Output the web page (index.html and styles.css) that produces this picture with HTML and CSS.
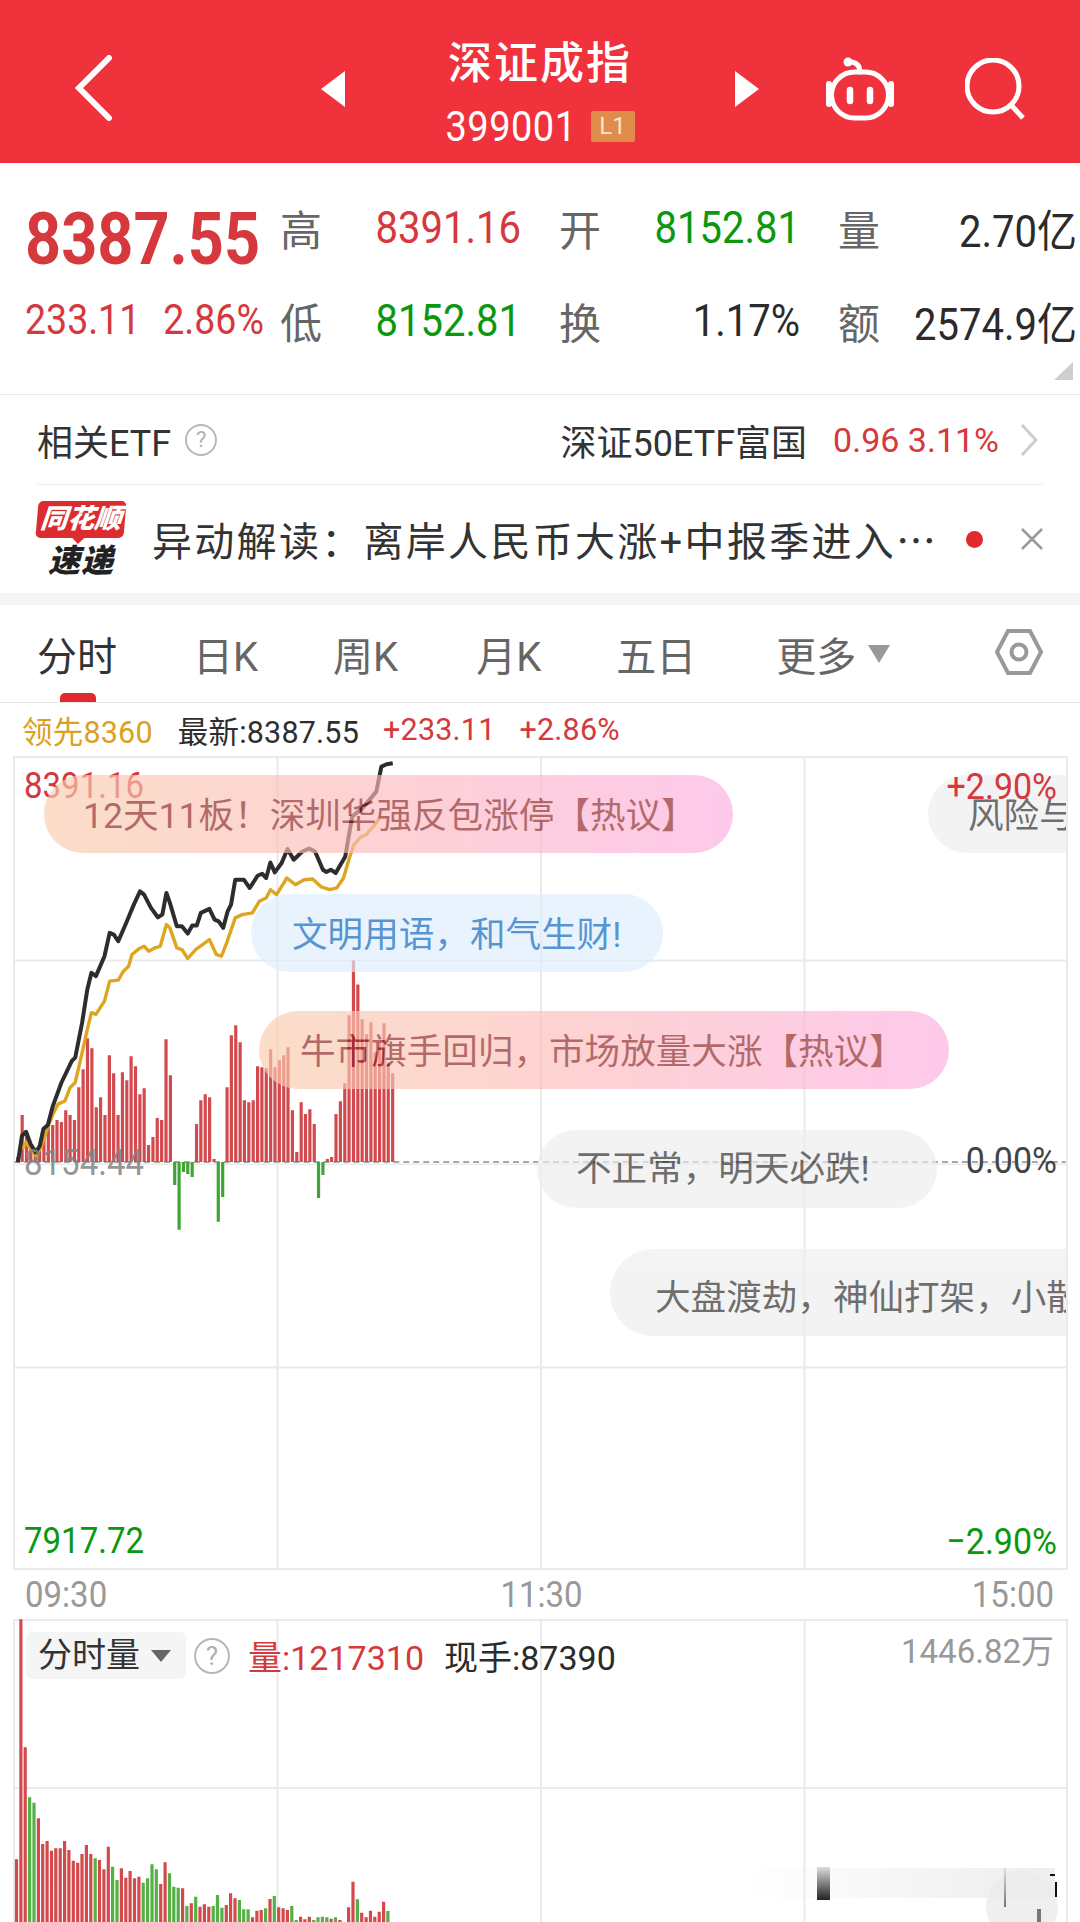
FILE: index.html
```html
<!DOCTYPE html>
<html lang="zh">
  <head>
    <meta charset="utf-8" />
    <title>深证成指</title>
    <link rel="stylesheet" href="styles.css">
  </head>
  <body>
    <header class="topbar">
      <svg class="back" viewBox="0 0 48 68"><path d="M39 3 L9 33 L39 63" /></svg>
      <svg class="tri tri-left" viewBox="0 0 25 36"><path d="M0 18 L24 0 V36 Z" /></svg>
      <div class="title">
        <div class="title-name">深证成指</div>
        <div class="title-code"><span class="tall">399001</span><span class="badge">L1</span></div>
      </div>
      <svg class="tri" viewBox="0 0 25 36"><path d="M25 18 L1 0 V36 Z" /></svg>
      <svg class="robot" viewBox="0 0 70 64">
        <rect x="6.5" y="15" width="57" height="46" rx="23" />
        <path class="ear" d="M4 27 V47 M66 27 V47" />
        <path d="M35 15 C35 9 32 6 27 5" />
        <circle class="dot" cx="23" cy="5" r="4.5" />
        <path class="eye" d="M25 33 V44 M45 33 V44" />
      </svg>
      <svg class="search" viewBox="0 0 62 62"><circle cx="28" cy="28" r="26" /><path d="M47 48 L58 60" /></svg>
    </header>

    <section class="quote">
      <div class="price">8387.55</div>
      <div class="stat"><span class="lbl">高</span><span class="val red">8391.16</span></div>
      <div class="stat"><span class="lbl">开</span><span class="val green">8152.81</span></div>
      <div class="stat"><span class="lbl">量</span><span class="val dark">2.70亿</span></div>
      <div class="change"><span class="tall">233.11</span><span class="tall">2.86%</span></div>
      <div class="stat"><span class="lbl">低</span><span class="val green">8152.81</span></div>
      <div class="stat"><span class="lbl">换</span><span class="val dark">1.17%</span></div>
      <div class="stat"><span class="lbl">额</span><span class="val dark">2574.9亿</span></div>
      <svg class="corner" viewBox="0 0 19 18"><path d="M19 0 V18 H0 Z" /></svg>
    </section>

    <section class="etf">
      <span class="etf-name">相关ETF</span>
      <span class="help">?</span>
      <span class="etf-fund">深证50ETF富国</span>
      <span class="etf-val">0.96 3.11%</span>
      <svg class="chev" viewBox="0 0 18 32"><path d="M2 1 L16 16 L2 31" /></svg>
    </section>

    <section class="ticker">
      <div class="logo">
        <div class="logo-top">同花顺</div>
        <div class="logo-sub">速递</div>
      </div>
      <div class="ticker-text">异动解读：离岸人民币大涨+中报季进入⋯</div>
      <span class="red-dot"></span>
      <svg class="close" viewBox="0 0 24 24"><path d="M2 2 L22 22 M22 2 L2 22" /></svg>
    </section>

    <div class="band"></div>

    <nav class="tabs">
      <span class="tab active">分时</span>
      <span class="tab t2">日K</span>
      <span class="tab t3">周K</span>
      <span class="tab t4">月K</span>
      <span class="tab t5">五日</span>
      <span class="tab t6">更多</span>
      <span class="caret"></span>
      <svg class="hex" viewBox="0 0 50 48">
        <path d="M14 3 H36 L47 24 L36 45 H14 L3 24 Z" />
        <circle cx="25" cy="24" r="7.5" />
      </svg>
    </nav>

    <div class="legend">
      <span class="lead">领先8360</span>
      <span class="last">最新:8387.55</span>
      <span class="up up1">+233.11</span>
      <span class="up up2">+2.86%</span>
    </div>

    <section class="chart">
      <svg id="priceChart" class="plot" viewBox="13 756 1054 814"></svg>
      <span class="ax ax-tl red">8391.16</span>
      <span class="ax ax-ml">8154.44</span>
      <span class="ax ax-mr">0.00%</span>
      <span class="ax ax-bl green">7917.72</span>
      <span class="ax ax-br green">−2.90%</span>
      <div class="barrage">
        <div class="bub hot b1">12天11板！深圳华强反包涨停【热议】</div>
        <div class="bub cool b2">文明用语，和气生财!</div>
        <div class="bub hot b3">牛市旗手回归，市场放量大涨【热议】</div>
        <div class="bub plain b4">不正常，明天必跌!</div>
        <div class="bub plain b5">大盘渡劫，神仙打架，小散遭殃</div>
        <div class="bub plain b6">风险与机遇并存</div>
      </div>
      <span class="ax ax-tr red">+2.90%</span>
    </section>

    <div class="times"><span class="tall">09:30</span><span class="tall mid">11:30</span><span class="tall">15:00</span></div>

    <section class="vol">
      <svg id="volChart" class="plot" viewBox="13 1619 1054 303"></svg>
      <div class="vol-head">
        <div class="chip">分时量<span class="chip-caret"></span></div>
        <span class="help help-vol">?</span>
        <span class="red vol-num">量:1217310</span>
        <span class="dark vol-hand">现手:87390</span>
        <span class="vol-max">1446.82万</span>
      </div>
      <div class="wm wm-band"></div>
      <div class="wm wm-block"></div>
      <div class="wm wm-circle"></div>
      <div class="wm wm-tick"></div>
      <div class="wm wm-bar"></div>
      <div class="wm wm-dash"></div>
      <div class="wm wm-bracket"></div>
    </section>

    <script src="chart.js"></script>
  </body>
</html>
```

FILE: styles.css
```css
html,
body {
  margin: 0;
  padding: 0;
}
body {
  width: 1080px;
  height: 1922px;
  overflow: hidden;
  background: #fff;
  color: #333;
  font-family: Roboto, "Noto Sans CJK SC", sans-serif;
}
.red {
  color: #d5383d;
}
.green {
  color: #0b980f;
}
.dark {
  color: #2b2b2b;
}
/* the app's digits are narrower and taller than Roboto */
.tall,
.val {
  display: inline-block;
  transform: scaleY(1.12);
}

/* top bar */
.topbar {
  height: 163px;
  background: #f0323c;
  display: flex;
  align-items: center;
  padding-top: 14px;
  box-sizing: border-box;
  color: #fff;
}
.back {
  width: 48px;
  height: 68px;
  margin-left: 70px;
  fill: none;
  stroke: #fff;
  stroke-width: 6;
  stroke-linecap: round;
}
.tri {
  width: 25px;
  height: 36px;
  fill: #fff;
}
.tri-left {
  margin-left: 203px;
}
.title {
  width: 388px;
  align-self: flex-start;
  text-align: center;
  margin-top: 20px;
}
.title-name {
  font-size: 44px;
  line-height: 60px;
  letter-spacing: 2px;
  font-weight: 500;
}
.title-code {
  font-size: 38px;
  line-height: 50px;
  margin-top: 7px;
  letter-spacing: 0.5px;
  display: flex;
  justify-content: center;
  align-items: center;
  gap: 14px;
}
.badge {
  width: 44px;
  height: 31px;
  line-height: 31px;
  background: #e08c4c;
  color: #fbe6c8;
  font-size: 24px;
  border-radius: 2px;
  letter-spacing: 0;
}
.robot {
  width: 70px;
  height: 64px;
  margin-left: 66px;
  fill: none;
  stroke: #fff;
  stroke-width: 5;
  stroke-linecap: round;
}
.robot .ear {
  stroke-width: 6;
}
.robot .eye {
  stroke-width: 6.5;
}
.robot .dot {
  fill: #fff;
  stroke: none;
}
.search {
  width: 62px;
  height: 62px;
  margin-left: 70px;
  fill: none;
  stroke: #fff;
  stroke-width: 5;
}

/* quote block */
.quote {
  height: 232px;
  box-sizing: border-box;
  border-bottom: 1px solid #e9e9e9;
  padding: 18px 4px 0 25px;
  display: grid;
  grid-template-columns: 217px 240px 240px 238px;
  grid-template-rows: 93px 93px;
  column-gap: 39px;
  position: relative;
}
.price {
  font-size: 63px;
  font-weight: 700;
  color: #d5383d;
  white-space: nowrap;
  line-height: 93px;
  margin-top: 11px;
  letter-spacing: 0;
  transform: scaleY(1.14);
}
.change {
  font-size: 37.5px;
  color: #d5383d;
  display: flex;
  gap: 23px;
  line-height: 93px;
  white-space: nowrap;
}
.stat {
  display: flex;
  justify-content: space-between;
  align-items: center;
  font-size: 40px;
  white-space: nowrap;
}
.lbl {
  color: #666;
  font-size: 42px;
  margin-left: -1px;
}
.corner {
  position: absolute;
  right: 7px;
  bottom: 14px;
  width: 19px;
  height: 18px;
  fill: #cfcfcf;
}

/* etf row */
.etf {
  margin: 0 37px;
  height: 90px;
  box-sizing: border-box;
  border-bottom: 1px solid #ececec;
  display: flex;
  align-items: center;
  font-size: 36px;
}
.help {
  width: 32px;
  height: 32px;
  box-sizing: border-box;
  border: 2px solid #b8b8b8;
  border-radius: 50%;
  color: #b0b0b0;
  font-size: 22px;
  line-height: 28px;
  text-align: center;
  margin-left: 14px;
}
.etf-fund {
  margin-left: auto;
}
.etf-val {
  color: #d5383d;
  font-size: 34px;
  margin-left: 26px;
}
.chev {
  width: 18px;
  height: 32px;
  margin: 0 5px 0 21px;
  fill: none;
  stroke: #cdcdcd;
  stroke-width: 3;
}

/* news ticker */
.ticker {
  height: 108px;
  display: flex;
  align-items: center;
  padding-left: 37px;
}
.logo {
  width: 88px;
  text-align: center;
}
.logo-top {
  position: relative;
  background: #dd2c2f;
  color: #fff;
  font-size: 27px;
  font-weight: 900;
  font-style: italic;
  line-height: 37px;
  border-radius: 5px;
  transform: skewX(-5deg);
}
.logo-top::after {
  content: "";
  position: absolute;
  left: 36px;
  bottom: -6px;
  border-left: 7px solid transparent;
  border-right: 7px solid transparent;
  border-top: 7px solid #dd2c2f;
}
.logo-sub {
  font-size: 32px;
  font-weight: 900;
  font-style: italic;
  color: #222;
  line-height: 34px;
  margin-top: 6px;
  letter-spacing: 1px;
}
.ticker-text {
  margin-left: 27px;
  font-size: 40px;
  letter-spacing: 2.3px;
  width: 786px;
  white-space: nowrap;
  color: #333;
}
.red-dot {
  width: 17px;
  height: 17px;
  border-radius: 50%;
  background: #e02a2e;
  margin-left: 28px;
}
.close {
  width: 24px;
  height: 24px;
  margin-left: 37px;
  fill: none;
  stroke: #9a9a9a;
  stroke-width: 2.5;
}
.band {
  height: 12px;
  background: #f5f5f5;
}

/* tabs */
.tabs {
  height: 98px;
  box-sizing: border-box;
  border-bottom: 1px solid #e6e6e6;
  display: flex;
  align-items: center;
  padding: 0 36px 0 37px;
  font-size: 40px;
  color: #666;
  position: relative;
}
.tab.active {
  color: #333;
}
.tabs::after {
  content: "";
  position: absolute;
  left: 60px;
  bottom: 0;
  width: 36px;
  height: 9px;
  background: #e02a2e;
  border-radius: 5px 5px 0 0;
}
.t2 {
  margin-left: 76px;
}
.t3 {
  margin-left: 75px;
}
.t4 {
  margin-left: 78px;
}
.t5 {
  margin-left: 75px;
}
.t6 {
  margin-left: 80px;
}
.caret {
  margin: 0 0 0 12px;
  border-left: 11px solid transparent;
  border-right: 11px solid transparent;
  border-top: 18px solid #999;
}
.hex {
  width: 50px;
  height: 48px;
  margin: -4px 0 0 auto;
  fill: none;
  stroke: #999;
  stroke-width: 4;
}

/* legend above the chart */
.legend {
  height: 53px;
  display: flex;
  align-items: center;
  padding-left: 22px;
  font-size: 30.5px;
  letter-spacing: 0.2px;
}
.lead {
  color: #dba01e;
}
.last {
  margin-left: 25px;
  color: #2e2e2e;
}
.up {
  color: #d5383d;
}
.up1 {
  margin-left: 24px;
}
.up2 {
  margin-left: 24px;
}

/* charts */
.chart,
.vol {
  position: relative;
  width: 1055px;
  margin-left: 13px;
  box-sizing: border-box;
  overflow: hidden;
  background-image: linear-gradient(#eaeaea 2px, transparent 2px),
    linear-gradient(90deg, #eaeaea 2px, transparent 2px);
}
.chart {
  height: 814px;
  border-right: 2px solid #eaeaea;
  border-bottom: 2px solid #eaeaea;
  background-size: 263.5px 203.5px;
}
.plot {
  position: absolute;
  left: 0;
  top: 0;
  width: 1054px;
  height: 100%;
}
.ax {
  position: absolute;
  font-size: 33px;
  line-height: 40px;
  transform: scaleY(1.1);
}
.ax-tl {
  left: 11px;
  top: 10px;
}
.ax-tr {
  right: 9px;
  top: 10px;
  font-size: 34px;
}
.ax-ml {
  left: 11px;
  top: 387px;
  color: rgba(130, 130, 130, 0.85);
}
.ax-mr {
  right: 9px;
  top: 384px;
  font-size: 34px;
  color: #444;
}
.ax-bl {
  left: 11px;
  top: 765px;
}
.ax-br {
  right: 9px;
  top: 765px;
  font-size: 34px;
}

/* comment bubbles floating over the chart */
.barrage {
  position: absolute;
  left: 0;
  top: 0;
  width: 100%;
  height: 100%;
  overflow: hidden;
}
.bub {
  position: absolute;
  height: 78px;
  line-height: 78px;
  padding-top: 2px;
  border-radius: 40px;
  font-size: 35.6px;
  white-space: nowrap;
  box-sizing: border-box;
  opacity: 0.66;
}
.hot {
  background: linear-gradient(90deg, #f9cdae, #fdbcbc 45%, #fcaee1);
  color: #8e1c1c;
}
.cool {
  background: #deeefc;
  color: #005fbc;
}
.plain {
  background: #eeeeee;
  color: #242424;
}
.b1 {
  left: 31px;
  top: 19px;
  width: 689px;
  padding-left: 39px;
}
.b2 {
  left: 238px;
  top: 138px;
  width: 412px;
  padding-left: 41px;
}
.b3 {
  left: 246px;
  top: 255px;
  width: 690px;
  padding-left: 41px;
}
.b4 {
  left: 524px;
  top: 374px;
  width: 400px;
  padding-left: 39px;
  padding-top: 0;
}
.b5 {
  left: 597px;
  top: 493px;
  width: 640px;
  height: 87px;
  line-height: 87px;
  padding-top: 6px;
  border-radius: 44px;
  padding-left: 45px;
}
.b6 {
  left: 915px;
  top: 19px;
  width: 320px;
  padding-left: 40px;
}

.times {
  height: 49px;
  display: flex;
  justify-content: space-between;
  align-items: center;
  padding: 0 26px 0 25px;
  font-size: 33px;
  color: #999;
}
.times .mid {
  margin-left: 4px;
}

.vol {
  height: 303px;
  background-size: 263.5px 168px;
  border-right: 2px solid #eaeaea;
  padding: 12px 0 0 13px;
}
.vol-head {
  position: relative;
  display: flex;
  align-items: center;
  font-size: 34px;
}
.chip {
  width: 160px;
  height: 47px;
  line-height: 47px;
  background: #f5f5f5;
  border-radius: 6px;
  box-sizing: border-box;
  padding-left: 12px;
  display: flex;
  align-items: center;
  color: #333;
}
.chip-caret {
  margin-left: 11px;
  border-left: 10px solid transparent;
  border-right: 10px solid transparent;
  border-top: 12px solid #666;
}
.help-vol {
  width: 36px;
  height: 36px;
  font-size: 26px;
  line-height: 32px;
  margin-left: 8px;
}
.vol-num {
  margin-left: 18px;
}
.vol-hand {
  margin-left: 20px;
}
.vol-max {
  margin-left: auto;
  margin-right: 12px;
  margin-top: -14px;
  font-size: 33px;
  color: #999;
}

/* blurred watermark remains in the corner */
.wm {
  position: absolute;
}
.wm-band {
  left: 732px;
  top: 249px;
  width: 310px;
  height: 30px;
  background: linear-gradient(90deg, rgba(240, 240, 240, 0), #efefef 90%);
}
.wm-block {
  left: 804px;
  top: 248px;
  width: 13px;
  height: 33px;
  background: linear-gradient(#ddd, #222);
}
.wm-circle {
  left: 973px;
  top: 252px;
  width: 72px;
  height: 72px;
  border-radius: 50%;
  background: rgba(235, 235, 235, 0.8);
}
.wm-tick {
  left: 991px;
  top: 249px;
  width: 2px;
  height: 39px;
  background: linear-gradient(#ddd, #777);
}
.wm-bar {
  left: 1024px;
  top: 290px;
  width: 4px;
  height: 13px;
  background: #777;
}
.wm-dash {
  left: 1037px;
  top: 255px;
  width: 5px;
  height: 2px;
  background: #111;
}
.wm-bracket {
  left: 1038px;
  top: 263px;
  width: 4px;
  height: 15px;
  border-right: 2px solid #111;
}
```

FILE: chart.js
```js
// points were read off the picture: x at 2.9 per px, y at 3 per px from y=750
const blackLine = [[48,1240],[60,1160],[72,1148],[85,1185],[100,1210],[112,1190],[122,1140],[135,1128],[150,1070],[175,1000],[205,935],[215,925],[235,820],[250,720],[262,670],[275,680],[300,620],[315,550],[327,555],[340,575],[365,515],[385,465],[403,425],[415,435],[435,475],[455,503],[468,495],[480,430],[490,460],[510,530],[525,530],[542,552],[555,528],[568,528],[580,490],[605,478],[620,510],[632,515],[645,535],[658,485],[668,465],[680,390],[705,390],[722,415],[745,378],[758,372],[770,385],[782,338],[795,368],[815,340],[832,298],[850,330],[875,305],[895,296],[912,305],[935,360],[945,367],[958,360],[972,370],[1000,320],[1020,200],[1050,175],[1070,150],[1090,125],[1105,50],[1120,43],[1138,40]];
const goldLine = [[60,1200],[72,1180],[85,1200],[100,1220],[115,1195],[135,1135],[150,1095],[165,1065],[185,1055],[200,1015],[215,1000],[235,910],[250,840],[262,790],[275,795],[300,755],[315,695],[340,692],[355,665],[370,650],[380,615],[400,598],[415,590],[428,605],[445,596],[462,590],[480,525],[490,535],[510,595],[525,600],[542,627],[565,600],[605,570],[625,615],[640,620],[655,580],[680,505],[700,495],[730,490],[750,455],[770,445],[782,420],[800,435],[830,385],[855,405],[880,390],[905,388],[930,412],[955,420],[975,415],[995,385],[1010,330],[1025,285],[1045,262],[1060,255],[1080,232],[1100,205]];

// one bar a minute, height in px, negative goes down in green
const priceBars = [5,47,30,17,13,17,27,37,37,42,40,52,47,42,75,93,124,114,55,65,47,107,89,47,90,82,106,96,68,74,17,25,44,42,123,87,-23,-68,-10,-12,-15,38,62,68,65,3,-60,-35,75,127,137,120,62,60,62,96,95,94,113,95,102,107,115,52,10,60,48,53,38,-36,-13,3,5,48,61,79,147,202,178,143,128,140,110,120,139,100,89];

// top of each volume bar in crop px, g marks a green one
const volBars = "838 118 502 652g 668g 715 792 783 812 805 805 783 810 842 848 822 795 822 835g 840 868 800 860g 900g 865 893 873 895 890 908g 895g 853g 868g 912 847 880g 920g 923g 925 978g 970 950g 980 973 980 978g 945g 983g 975 940 955 960g 988g 988g 1012 992 990 985g 957 948g 982 985 990 978g 1020g 1010 1018 1010 1020g 1012g 1010g 1012g 1016 1012g 1020 1026 982 905 958g 998 1012 992 1010 995 965 993g".split(" ");

const NS = "http://www.w3.org/2000/svg";
const BAR_W = 3.2;
const PITCH = 4.37;
const X0 = 16.5;

function add(svg, name, attrs) {
  const el = document.createElementNS(NS, name);
  for (const key in attrs) el.setAttribute(key, attrs[key]);
  svg.appendChild(el);
}

function linePath(points) {
  return "M" + points.map((p) => (p[0] / 2.9).toFixed(1) + " " + (750 + p[1] / 3).toFixed(1)).join("L");
}

const price = document.getElementById("priceChart");
const BASE = 1163;
let redBars = "";
let greenBars = "";
priceBars.forEach((h, i) => {
  const x = (X0 + i * PITCH).toFixed(1);
  if (h > 0) redBars += `M${x} ${BASE}V${BASE - h}`;
  else greenBars += `M${x} ${BASE}V${BASE - h}`;
});
add(price, "path", { d: `M13 ${BASE}H1067`, stroke: "#fff", "stroke-width": 3 });
add(price, "path", { d: `M13 ${BASE}H1067`, stroke: "#a8a8a8", "stroke-width": 2, "stroke-dasharray": "6 4" });
add(price, "path", { d: redBars, stroke: "#d24a4e", "stroke-width": BAR_W });
add(price, "path", { d: greenBars, stroke: "#3fa535", "stroke-width": BAR_W });
add(price, "path", { d: linePath(goldLine), fill: "none", stroke: "#dea521", "stroke-width": 3.4, "stroke-linejoin": "round" });
add(price, "path", { d: linePath(blackLine), fill: "none", stroke: "#2d2d2d", "stroke-width": 4, "stroke-linejoin": "round" });

const vol = document.getElementById("volChart");
let volRed = "";
let volGreen = "";
volBars.forEach((v, i) => {
  const x = (X0 + i * PITCH).toFixed(1);
  const top = 1580 + parseInt(v) / 3;
  const seg = `M${x} 1922V${top.toFixed(1)}`;
  if (v.endsWith("g")) volGreen += seg;
  else volRed += seg;
});
add(vol, "path", { d: volRed, stroke: "#d24a4e", "stroke-width": BAR_W });
add(vol, "path", { d: volGreen, stroke: "#55b046", "stroke-width": BAR_W });
```
